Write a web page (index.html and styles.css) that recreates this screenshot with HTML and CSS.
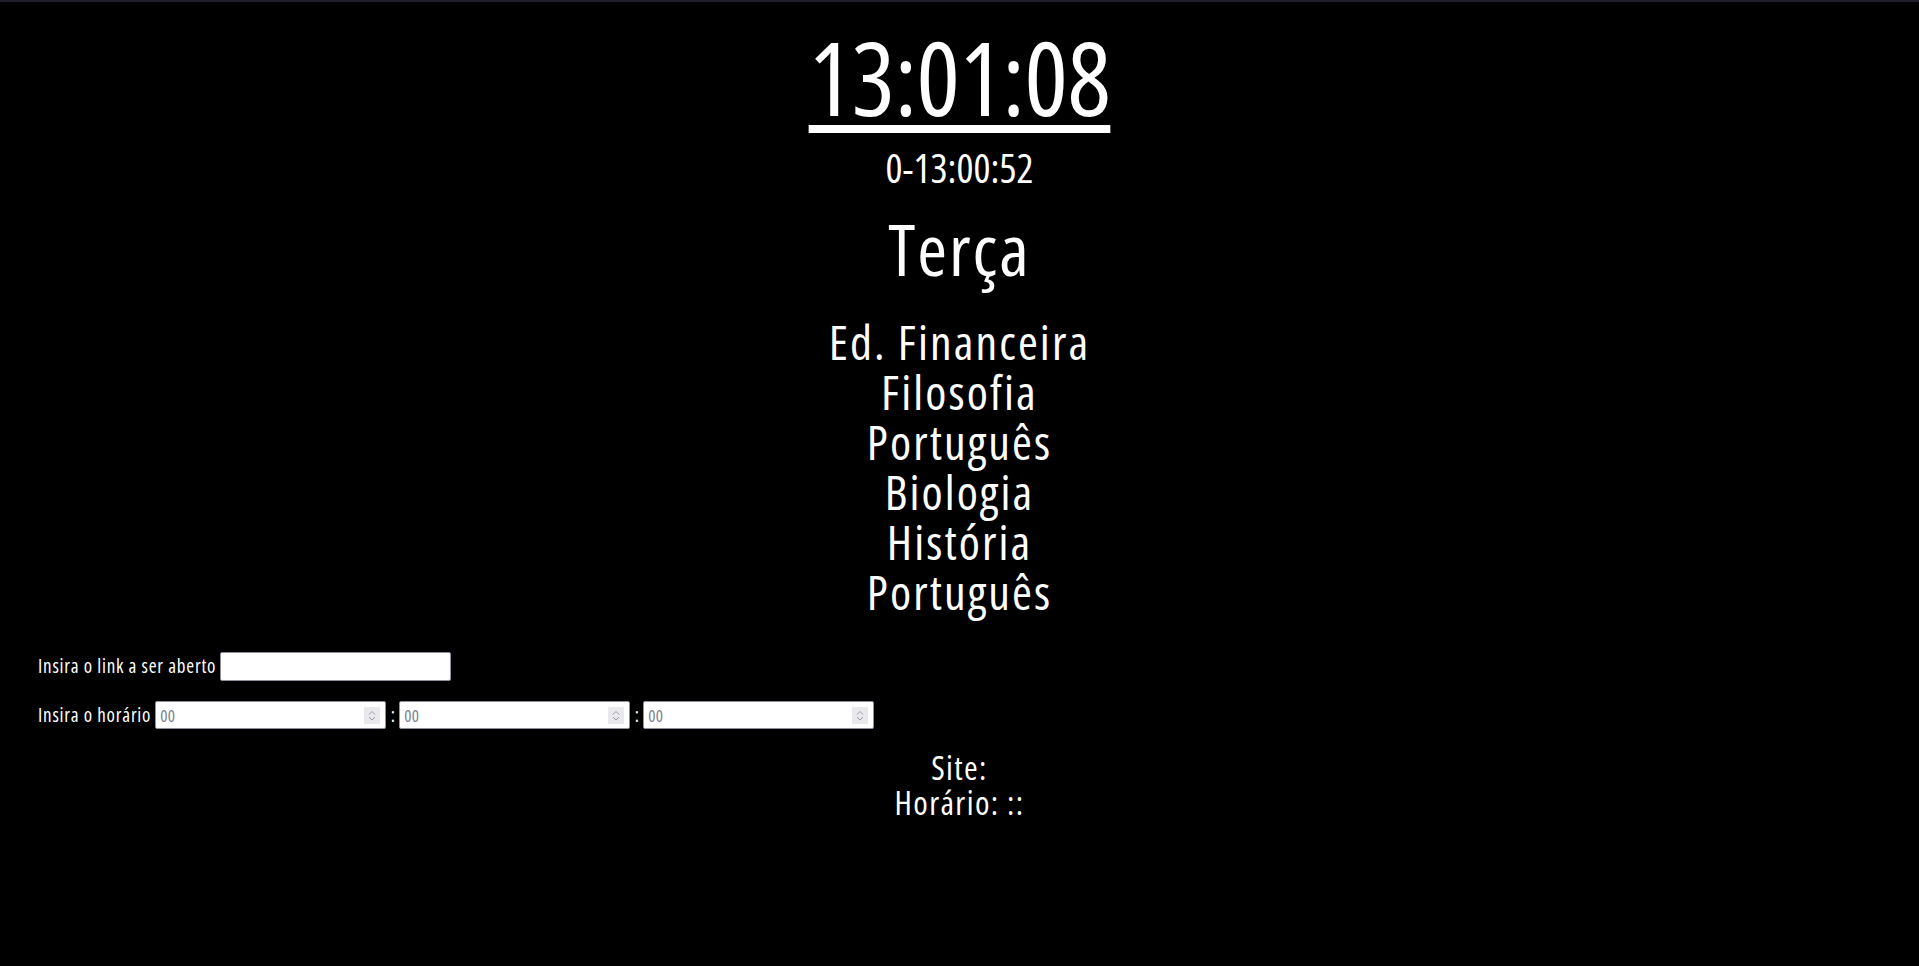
FILE: index.html
```html
<!DOCTYPE html>
<html lang="pt-BR">
<head>
<meta charset="utf-8">
<title>Horário</title>
<link rel="stylesheet" href="styles.css">
</head>
<body>
<main class="page">
  <div class="clock">13:01:08</div>
  <div class="countdown">0-13:00:52</div>
  <div class="weekday">Terça</div>
  <ul class="subjects">
    <li>Ed. Financeira</li>
    <li>Filosofia</li>
    <li>Português</li>
    <li>Biologia</li>
    <li>História</li>
    <li>Português</li>
  </ul>
  <form class="form">
    <div class="row">
      <label class="label" for="link">Insira o link a ser aberto</label>
      <input class="text-input" id="link" type="text">
    </div>
    <div class="row">
      <label class="label" for="h">Insira o horário</label>
      <div class="num-box">
        <input class="num-input" id="h" type="number" placeholder="00">
        <span class="spin"><svg width="16" height="17" viewBox="0 0 16 17"><path d="M5 7.5 L8 4.5 L11 7.5 M5 10 L8 13 L11 10" fill="none" stroke="#9b9ba6" stroke-width="1"/></svg></span>
      </div>
      <span class="sep">:</span>
      <div class="num-box">
        <input class="num-input" type="number" placeholder="00">
        <span class="spin"><svg width="16" height="17" viewBox="0 0 16 17"><path d="M5 7.5 L8 4.5 L11 7.5 M5 10 L8 13 L11 10" fill="none" stroke="#9b9ba6" stroke-width="1"/></svg></span>
      </div>
      <span class="sep">:</span>
      <div class="num-box">
        <input class="num-input" type="number" placeholder="00">
        <span class="spin"><svg width="16" height="17" viewBox="0 0 16 17"><path d="M5 7.5 L8 4.5 L11 7.5 M5 10 L8 13 L11 10" fill="none" stroke="#9b9ba6" stroke-width="1"/></svg></span>
      </div>
    </div>
  </form>
  <div class="info">
    <div class="info-line">Site: </div>
    <div class="info-line">Horário: ::</div>
  </div>
</main>
</body>
</html>
```
FILE: styles.css
```css
html, body {
  margin: 0;
  padding: 0;
  background: #000;
}
body {
  border-top: 2px solid #1d1e29;
  color: #fff;
  font-family: "Open Sans", "Noto Sans", sans-serif;
  font-stretch: condensed;
}
.page {
  display: flex;
  flex-direction: column;
  align-items: stretch;
}
.clock {
  margin-top: 15px;
  text-align: center;
  font-size: 102px;
  line-height: 120px;
  letter-spacing: -0.5px;
  text-decoration: underline;
  text-decoration-thickness: 8px;
  text-underline-offset: 9px;
}
.countdown {
  margin-top: 7px;
  text-align: center;
  font-size: 40px;
  line-height: 48px;
}
.weekday {
  margin-top: 13px;
  text-align: center;
  font-size: 72px;
  line-height: 86px;
  letter-spacing: 2px;
}
.subjects {
  list-style: none;
  margin: 26px 0 0;
  padding: 0;
  text-align: center;
  font-size: 48px;
  line-height: 50px;
  letter-spacing: 2.1px;
}
.form {
  margin-top: 35px;
  padding-left: 38px;
  display: flex;
  flex-direction: column;
  gap: 21px;
}
.row {
  display: flex;
  align-items: center;
  height: 28px;
}
.label {
  font-size: 19px;
  letter-spacing: 0.8px;
  margin-right: 4px;
  white-space: nowrap;
}
.text-input {
  box-sizing: border-box;
  width: 231px;
  height: 29px;
  border: 1px solid #8f8f9d;
  border-radius: 2px;
  background: #fff;
  padding: 0 4px;
  margin: 0;
  outline: none;
}
.num-box {
  box-sizing: border-box;
  width: 231px;
  height: 28px;
  border: 1px solid #8f8f9d;
  border-radius: 2px;
  background: #fff;
  display: flex;
  align-items: center;
  padding: 0 5px 0 4px;
}
.num-input {
  flex: 1;
  min-width: 0;
  border: 0;
  outline: none;
  padding: 0;
  margin: 0;
  background: transparent;
  font-family: "Open Sans", sans-serif;
  font-stretch: condensed;
  font-size: 17px;
  letter-spacing: 0.3px;
  color: #222;
  -moz-appearance: textfield;
}
.num-input::placeholder {
  color: #7a8290;
  opacity: 1;
}
.num-input::-webkit-inner-spin-button,
.num-input::-webkit-outer-spin-button {
  -webkit-appearance: none;
  margin: 0;
}
.spin {
  display: flex;
  width: 16px;
  height: 17px;
  background: #e9e9ed;
}
.sep {
  width: 13px;
  text-align: center;
  font-size: 19px;
}
.info {
  margin-top: 21px;
  text-align: center;
  font-size: 33px;
  line-height: 35px;
  letter-spacing: 1.4px;
}
```
